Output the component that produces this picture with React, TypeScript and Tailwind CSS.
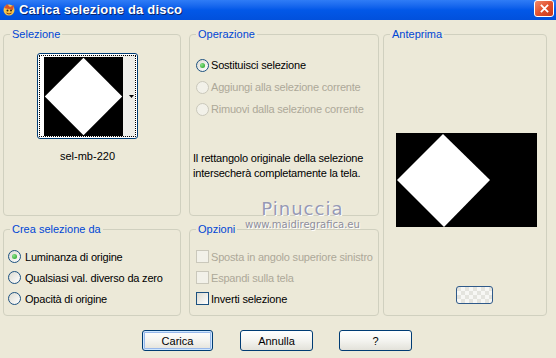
import type { ReactNode } from "react";

const BG = "bg-[#ECE9D8]";

function Group({ title, className = "", children }: { title: string; className?: string; children?: ReactNode }) {
  return (
    <div className={`relative rounded-[4px] border border-[#D0D0BF] ${className}`}>
      <span className={`absolute -top-[8px] left-[6px] ${BG} px-[2px] text-[11px] leading-[14px] text-[#0046D5]`}>
        {title}
      </span>
      {children}
    </div>
  );
}

function Radio({ checked = false, disabled = false }: { checked?: boolean; disabled?: boolean }) {
  return (
    <span
      className={`flex h-[13px] w-[13px] shrink-0 items-center justify-center rounded-full border ${
        disabled
          ? "border-[#CAC8BB] bg-[#F2F1E9]"
          : "border-[#1C5180] bg-gradient-to-br from-[#DCDBD2] to-white"
      }`}
    >
      {checked && <span className="h-[5px] w-[5px] rounded-full bg-[radial-gradient(circle_at_35%_35%,#8AE28A,#1E9E1E)]" />}
    </span>
  );
}

function Check({ disabled = false }: { disabled?: boolean }) {
  return (
    <span
      className={`block h-[13px] w-[13px] shrink-0 border ${
        disabled ? "border-[#CAC8BB] bg-[#F2F1E9]" : "border-[#1C5180] bg-gradient-to-br from-[#DCDBD2] to-white"
      }`}
    />
  );
}

function Row({ children, text, disabled = false, gap = "gap-[2px]" }: { children: ReactNode; text: string; disabled?: boolean; gap?: string }) {
  return (
    <div className={`flex items-center whitespace-nowrap ${gap}`}>
      {children}
      <span className={`tracking-[-0.2px] ${disabled ? "text-[#ACA899]" : "text-black"}`}>{text}</span>
    </div>
  );
}

function Button({ label, active = false, w = "w-[73px]" }: { label: string; active?: boolean; w?: string }) {
  return (
    <button
      className={`h-[21px] ${w} rounded-[3px] border border-[#003C74] bg-gradient-to-b from-white via-[#F4F4F0] to-[#E3E2DA] text-[11px] text-black ${
        active ? "shadow-[inset_0_0_0_1px_#CEE7FF,inset_0_0_0_2px_#98B8EA]" : ""
      }`}
    >
      {label}
    </button>
  );
}

export default function App() {
  return (
    <div className={`h-[358px] w-[556px] overflow-hidden ${BG} font-['Liberation_Sans',Arial,sans-serif] text-[11px] leading-[14px]`}>
      {/* title bar */}
      <div className="flex h-[20px] items-center bg-gradient-to-b from-[#2F7CF6] via-[#0258E8] to-[#0150DC] pl-[2px] pr-[2px]">
        <svg viewBox="0 0 14 14" className="h-[14px] w-[14px]">
          <circle cx="7" cy="7" r="5.5" fill="#F6C44A" />
          <path d="M2 5 L5 1 L8 4 L12 2 L11 7 Z" fill="#D9552B" />
          <circle cx="5.5" cy="7.5" r="1" fill="#3B2A12" />
          <circle cx="9" cy="7.5" r="1" fill="#3B2A12" />
          <path d="M4.5 10 Q7 12 9.5 10" stroke="#8A3A12" strokeWidth="1" fill="none" />
        </svg>
        <span className="ml-[3px] text-[13px] font-bold tracking-[0.2px] text-white [text-shadow:1px_1px_0_#0A246A]">
          Carica selezione da disco
        </span>
        <span className="ml-auto flex h-[17px] w-[20px] items-center justify-center self-start rounded-[3px] border border-white bg-gradient-to-br from-[#F0886A] via-[#E2512E] to-[#C8381A]">
          <svg viewBox="0 0 10 10" className="h-[9px] w-[9px]">
            <path d="M1 1 L9 9 M9 1 L1 9" stroke="#fff" strokeWidth="2" />
          </svg>
        </span>
      </div>

      {/* body */}
      <div className="relative px-[3px] pt-[14px]">
        <div className="grid grid-cols-[178px_198px_168px] grid-rows-[182px_87px] gap-y-[13px]">
          <Group title="Selezione">
            <div className="pl-[33px] pt-[18px]">
              <div className="flex h-[86px] w-[101px] rounded-[3px] border border-[#003C74] bg-white p-[1px]">
                <div className="flex h-full w-full border border-dotted border-black bg-gradient-to-r from-white to-[#EDEDE8]">
                  <svg viewBox="0 0 100 100" className="ml-[4px] mt-[1px] h-[79px] w-[79px]" preserveAspectRatio="none">
                    <rect width="100" height="100" fill="#000" />
                    <polygon points="50,1 99,50 50,99 1,50" fill="#fff" />
                  </svg>
                  <div className="flex flex-1 items-center justify-end pr-[1px]">
                    <svg viewBox="0 0 5 3" className="h-[3px] w-[5px]">
                      <polygon points="0,0 5,0 2.5,3" fill="#000" />
                    </svg>
                  </div>
                </div>
              </div>
              <div className="mt-[10px] w-[101px] text-center">sel-mb-220</div>
            </div>
          </Group>

          <Group title="Operazione" className="ml-[8px]">
            <div className="pl-[6px] pt-[19px]">
              <div className="flex h-[22px] items-center">
                <Row text="Sostituisci selezione">
                  <Radio checked />
                </Row>
              </div>
              <div className="flex h-[22px] items-center">
                <Row text="Aggiungi alla selezione corrente" disabled>
                  <Radio disabled />
                </Row>
              </div>
              <div className="flex h-[22px] items-center">
                <Row text="Rimuovi dalla selezione corrente" disabled>
                  <Radio disabled />
                </Row>
              </div>
              <p className="-ml-[3px] mt-[31px] whitespace-nowrap leading-[15px] tracking-[-0.2px]">
                Il rettangolo originale della selezione
                <br />
                intersecherà completamente la tela.
              </p>
            </div>
          </Group>

          <Group title="Anteprima" className="row-span-2 ml-[4px]">
            <div className="flex flex-col pl-[12px] pt-[98px]">
              <svg viewBox="0 0 141 94" className="h-[94px] w-[141px]">
                <rect width="141" height="94" fill="#000" />
                <polygon points="47,1 94,47 48,94 1,47" fill="#fff" />
              </svg>
              <div className="ml-[60px] mt-[59px] h-[18px] w-[37px] rounded-[3px] border border-[#2F5A8A] bg-[repeating-conic-gradient(#F7F7F4_0_25%,#E4E4DE_0_50%)] bg-[length:8px_8px]" />
            </div>
          </Group>

          <Group title="Crea selezione da">
            <div className="pl-[4px] pt-[16px]">
              <div className="flex h-[21px] items-center">
                <Row text="Luminanza di origine" gap="gap-[4px]">
                  <Radio checked />
                </Row>
              </div>
              <div className="flex h-[21px] items-center">
                <Row text="Qualsiasi val. diverso da zero" gap="gap-[4px]">
                  <Radio />
                </Row>
              </div>
              <div className="flex h-[21px] items-center">
                <Row text="Opacità di origine" gap="gap-[4px]">
                  <Radio />
                </Row>
              </div>
            </div>
          </Group>

          <Group title="Opzioni" className="ml-[8px]">
            <div className="pl-[6px] pt-[16px]">
              <div className="flex h-[21px] items-center">
                <Row text="Sposta in angolo superiore sinistro" disabled>
                  <Check disabled />
                </Row>
              </div>
              <div className="flex h-[21px] items-center">
                <Row text="Espandi sulla tela" disabled>
                  <Check disabled />
                </Row>
              </div>
              <div className="flex h-[21px] items-center">
                <Row text="Inverti selezione">
                  <Check />
                </Row>
              </div>
            </div>
          </Group>
        </div>

        {/* watermark overlay */}
        <div className="pointer-events-none absolute left-[245px] top-[178px] flex flex-col items-center">
          <span className="font-['DejaVu_Sans',sans-serif] text-[18px] leading-[21px] tracking-[1px] text-[#9699B4] [text-shadow:1px_1px_0_#fff]">
            Pinuccia
          </span>
          <span className="font-['DejaVu_Sans',sans-serif] text-[10px] leading-[12px] text-[#8E8E9C] [text-shadow:1px_1px_0_#fff]">
            www.maidiregrafica.eu
          </span>
        </div>

        <div className="mt-[14px] flex pl-[139px]">
          <Button label="Carica" active w="w-[71px]" />
          <div className="ml-[27px]">
            <Button label="Annulla" />
          </div>
          <div className="ml-[26px]">
            <Button label="?" />
          </div>
        </div>
      </div>
    </div>
  );
}
